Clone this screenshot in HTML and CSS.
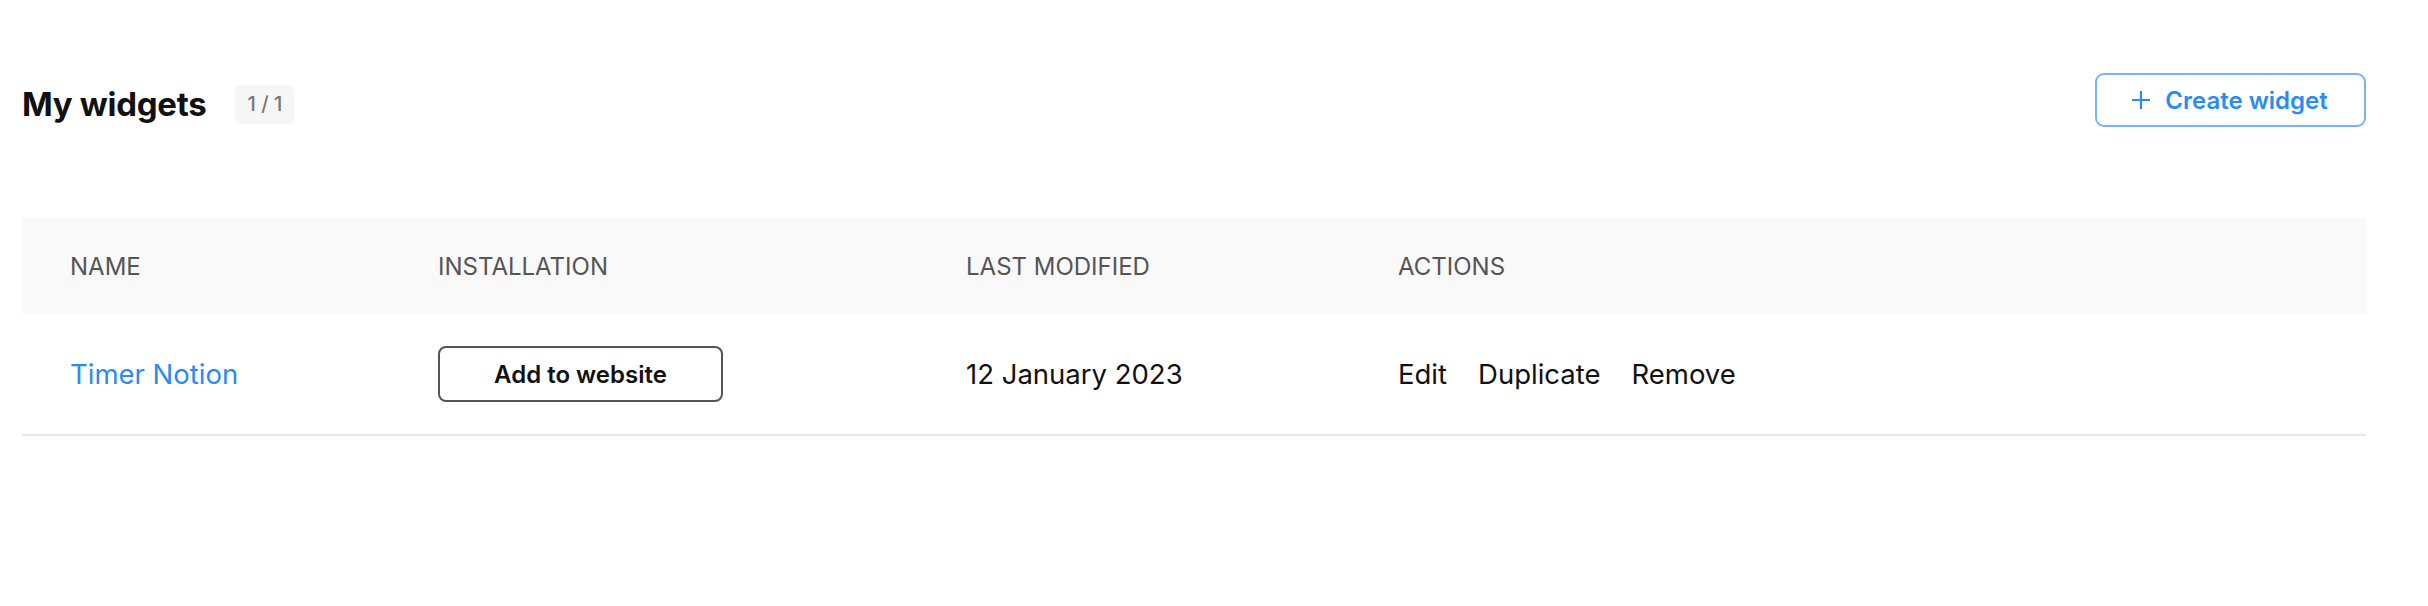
FILE: index.html
```html
<!DOCTYPE html>
<html lang="en">
<head>
<meta charset="utf-8">
<title>My widgets</title>
<link rel="stylesheet" href="styles.css">
</head>
<body>
<div class="page">
  <div class="topbar">
    <div class="title-group">
      <h1 class="title">My widgets</h1>
      <span class="badge">1 / 1</span>
    </div>
    <button class="create-btn" type="button">
      <svg class="plus" width="20" height="20" viewBox="0 0 20 20" aria-hidden="true">
        <path d="M10 1v18M1 10h18" stroke="currentColor" stroke-width="2.2" fill="none"/>
      </svg>
      <span>Create widget</span>
    </button>
  </div>

  <div class="table">
    <div class="thead">
      <div class="cell first">NAME</div>
      <div class="cell">INSTALLATION</div>
      <div class="cell">LAST MODIFIED</div>
      <div class="cell">ACTIONS</div>
    </div>
    <div class="trow">
      <div class="cell first"><a class="name-link" href="#">Timer Notion</a></div>
      <div class="cell"><button class="add-btn" type="button">Add to website</button></div>
      <div class="cell date">12 January 2023</div>
      <div class="cell actions">
        <a href="#" class="action">Edit</a>
        <a href="#" class="action">Duplicate</a>
        <a href="#" class="action">Remove</a>
      </div>
    </div>
  </div>
</div>
</body>
</html>
```

FILE: styles.css
```css
* { box-sizing: border-box; }

body {
  margin: 0;
  background: #ffffff;
  font-family: Inter, "Open Sans", "Liberation Sans", sans-serif;
  color: #111111;
}

.page {
  padding: 73px 62px 0 22px;
}

.topbar {
  display: flex;
  align-items: center;
  justify-content: space-between;
  height: 54px;
}

.title-group {
  display: flex;
  align-items: center;
  gap: 29px;
  margin-top: 8px;
}

.title {
  margin: 0;
  font-size: 33px;
  font-weight: 700;
  color: #111111;
  letter-spacing: -0.3px;
}

.badge {
  display: inline-flex;
  align-items: center;
  justify-content: center;
  width: 59px;
  height: 39px;
  border-radius: 6px;
  background: #f6f6f6;
  color: #777777;
  font-size: 20px;
  font-weight: 500;
}

.create-btn {
  display: flex;
  align-items: center;
  justify-content: center;
  gap: 14px;
  width: 271px;
  height: 54px;
  border: 2px solid #78b3f6;
  border-radius: 9px;
  background: #ffffff;
  color: #2a8cf2;
  font-family: inherit;
  font-size: 24px;
  font-weight: 600;
  padding: 0 2px 0 0;
  cursor: pointer;
}

.plus { display: block; }

.table {
  margin-top: 91px;
}

.thead,
.trow {
  display: grid;
  grid-template-columns: 416px 528px 432px 1fr;
  align-items: center;
}

.thead {
  height: 96px;
  background: #f9f9f9;
  color: #555555;
  font-size: 24px;
  font-weight: 400;
}

.trow {
  height: 122px;
  border-bottom: 2px solid #e8e8e8;
  font-size: 27.5px;
  color: #111111;
}

.cell.first {
  padding-left: 48px;
}

.name-link {
  color: #2a8cf2;
  text-decoration: none;
}

.add-btn {
  width: 285px;
  height: 56px;
  border: 2px solid #555555;
  border-radius: 8px;
  background: #ffffff;
  color: #111111;
  font-family: inherit;
  font-size: 24px;
  font-weight: 600;
  cursor: pointer;
}

.actions {
  display: flex;
  gap: 31px;
}

.action {
  color: #111111;
  text-decoration: none;
}
```
